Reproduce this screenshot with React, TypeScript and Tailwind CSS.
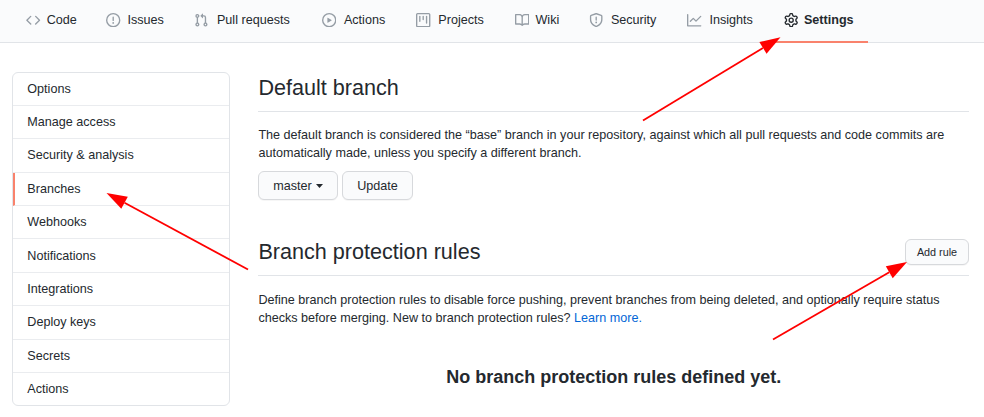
import React from "react";

const ICONS = {
  code: "M4.72 3.22a.75.75 0 011.06 1.06L2.06 8l3.72 3.72a.75.75 0 11-1.06 1.06L.47 8.53a.75.75 0 010-1.06l4.25-4.25zm6.56 0a.75.75 0 10-1.06 1.06L13.94 8l-3.72 3.72a.75.75 0 101.06 1.06l4.25-4.25a.75.75 0 000-1.06l-4.25-4.25z",
  issue: "M8 1.5a6.5 6.5 0 100 13 6.5 6.5 0 000-13zM0 8a8 8 0 1116 0A8 8 0 010 8zm9 3a1 1 0 11-2 0 1 1 0 012 0zm-.25-6.25a.75.75 0 00-1.5 0v3.5a.75.75 0 001.5 0v-3.5z",
  pull: "M7.177 3.073L9.573.677A.25.25 0 0110 .854v4.792a.25.25 0 01-.427.177L7.177 3.427a.25.25 0 010-.354zM3.75 2.5a.75.75 0 100 1.5.75.75 0 000-1.5zm-2.25.75a2.25 2.25 0 113 2.122v5.256a2.251 2.251 0 11-1.5 0V5.372A2.25 2.25 0 011.5 3.25zM11 2.5h-1V4h1a1 1 0 011 1v5.628a2.251 2.251 0 101.5 0V5A2.5 2.5 0 0011 2.5zm1 10.25a.75.75 0 111.5 0 .75.75 0 01-1.5 0zM3.75 12a.75.75 0 100 1.5.75.75 0 000-1.5z",
  play: "M1.5 8a6.5 6.5 0 1113 0 6.5 6.5 0 01-13 0zM8 0a8 8 0 100 16A8 8 0 008 0zM6.379 5.227A.25.25 0 006 5.442v5.117a.25.25 0 00.379.214l4.264-2.559a.25.25 0 000-.428L6.379 5.227z",
  project: "M1.75 0A1.75 1.75 0 000 1.75v12.5C0 15.216.784 16 1.75 16h12.5A1.75 1.75 0 0016 14.25V1.75A1.75 1.75 0 0014.25 0H1.75zM1.5 1.75a.25.25 0 01.25-.25h12.5a.25.25 0 01.25.25v12.5a.25.25 0 01-.25.25H1.75a.25.25 0 01-.25-.25V1.75zM11.75 3a.75.75 0 00-.75.75v7.5a.75.75 0 001.5 0v-7.5a.75.75 0 00-.75-.75zm-8.25.75a.75.75 0 011.5 0v5.5a.75.75 0 01-1.5 0v-5.5zM8 3a.75.75 0 00-.75.75v3.5a.75.75 0 001.5 0v-3.5A.75.75 0 008 3z",
  book: "M0 1.75A.75.75 0 01.75 1h4.253c1.227 0 2.317.59 3 1.501A3.744 3.744 0 0111.006 1h4.245a.75.75 0 01.75.75v10.5a.75.75 0 01-.75.75h-4.507a2.25 2.25 0 00-1.591.659l-.622.621a.75.75 0 01-1.06 0l-.622-.621A2.25 2.25 0 005.258 13H.75a.75.75 0 01-.75-.75V1.75zm8.755 3a2.25 2.25 0 012.25-2.25H14.5v9h-3.757c-.71 0-1.4.201-1.992.572l.004-7.322zm-1.504 7.324l.004-5.073-.002-2.253A2.25 2.25 0 005.003 2.5H1.5v9h3.757a3.75 3.75 0 011.994.574z",
  shield: "M7.467.133a1.75 1.75 0 011.066 0l5.25 1.68A1.75 1.75 0 0115 3.48V7c0 1.566-.32 3.182-1.303 4.682-.983 1.498-2.585 2.813-5.032 3.855a1.7 1.7 0 01-1.33 0c-2.447-1.042-4.049-2.357-5.032-3.855C1.32 10.182 1 8.566 1 7V3.48a1.75 1.75 0 011.217-1.667l5.25-1.68zm.61 1.429a.25.25 0 00-.153 0l-5.25 1.68a.25.25 0 00-.174.238V7c0 1.358.275 2.666 1.057 3.86.784 1.194 2.121 2.34 4.366 3.297a.2.2 0 00.154 0c2.245-.956 3.582-2.104 4.366-3.298C13.225 9.666 13.5 8.36 13.5 7V3.48a.25.25 0 00-.174-.237l-5.25-1.68zM9 10.5a1 1 0 11-2 0 1 1 0 012 0zm-.25-5.75a.75.75 0 10-1.5 0v3a.75.75 0 001.5 0v-3z",
  graph: "M1.5 1.75a.75.75 0 00-1.5 0v12.5c0 .414.336.75.75.75h14.5a.75.75 0 000-1.5H1.5V1.75zm14.28 2.53a.75.75 0 00-1.06-1.06L10 7.94 7.53 5.47a.75.75 0 00-1.06 0L3.22 8.72a.75.75 0 001.06 1.06L7 7.06l2.47 2.47a.75.75 0 001.06 0l5.25-5.25z",
  gear: "M7.429 1.525a6.593 6.593 0 011.142 0c.036.003.108.036.137.146l.289 1.105c.147.56.55.967.997 1.189.174.086.341.183.501.29.417.278.97.423 1.53.27l1.102-.303c.11-.03.175.016.195.046.219.31.41.641.573.989.014.031.022.11-.059.19l-.815.806c-.411.406-.562.957-.53 1.456a4.588 4.588 0 010 .582c-.032.499.119 1.05.53 1.456l.815.806c.08.08.073.159.059.19a6.494 6.494 0 01-.573.99c-.02.029-.086.074-.195.045l-1.103-.303c-.559-.153-1.112-.008-1.529.27-.16.107-.327.204-.5.29-.449.222-.851.628-.998 1.189l-.289 1.105c-.029.11-.101.143-.137.146a6.613 6.613 0 01-1.142 0c-.036-.003-.108-.037-.137-.146l-.289-1.105c-.147-.56-.55-.967-.997-1.189a4.502 4.502 0 01-.501-.29c-.417-.278-.97-.423-1.53-.27l-1.102.303c-.11.03-.175-.016-.195-.046a6.492 6.492 0 01-.573-.989c-.014-.031-.022-.11.059-.19l.815-.806c.411-.406.562-.957.53-1.456a4.587 4.587 0 010-.582c.032-.499-.119-1.05-.53-1.456l-.815-.806c-.08-.08-.073-.159-.059-.19a6.44 6.44 0 01.573-.99c.02-.029.086-.075.195-.045l1.103.303c.559.153 1.112.008 1.529-.27.16-.107.327-.204.5-.29.449-.222.851-.628.998-1.189l.289-1.105c.029-.11.101-.143.137-.146zM8 0c-.236 0-.47.01-.701.03-.743.065-1.29.615-1.458 1.261l-.29 1.106c-.017.066-.078.158-.211.224a5.994 5.994 0 00-.668.386c-.123.082-.233.09-.3.071L3.27 2.776c-.644-.177-1.392.02-1.82.63a7.977 7.977 0 00-.704 1.217c-.315.675-.111 1.422.363 1.891l.815.806c.05.048.098.147.088.294a6.084 6.084 0 000 .772c.01.147-.038.246-.088.294l-.815.806c-.474.469-.678 1.216-.363 1.891.2.428.436.835.704 1.218.428.609 1.176.806 1.82.63l1.103-.303c.066-.019.176-.011.299.071.213.143.436.272.668.386.133.066.194.158.212.224l.289 1.106c.169.646.715 1.196 1.458 1.26a8.094 8.094 0 001.402 0c.743-.064 1.29-.614 1.458-1.26l.29-1.106c.017-.066.078-.158.211-.224a5.98 5.98 0 00.668-.386c.123-.082.233-.09.3-.071l1.102.302c.644.177 1.392-.02 1.82-.63.268-.382.505-.789.704-1.217.315-.675.111-1.422-.364-1.891l-.814-.806c-.05-.048-.098-.147-.088-.294a6.1 6.1 0 000-.772c-.01-.147.039-.246.088-.294l.814-.806c.475-.469.679-1.216.364-1.891a7.992 7.992 0 00-.704-1.218c-.428-.609-1.176-.806-1.82-.63l-1.103.303c-.066.019-.176.011-.299-.071a5.991 5.991 0 00-.668-.386c-.133-.066-.194-.158-.212-.224L10.16 1.29C9.99.645 9.444.095 8.701.031A8.094 8.094 0 008 0zm1.5 8a1.5 1.5 0 11-3 0 1.5 1.5 0 013 0zM11 8a3 3 0 11-6 0 3 3 0 016 0z",
};

type IconName = keyof typeof ICONS;

const TABS: { icon: IconName; label: string; active?: boolean }[] = [
  { icon: "code", label: "Code" },
  { icon: "issue", label: "Issues" },
  { icon: "pull", label: "Pull requests" },
  { icon: "play", label: "Actions" },
  { icon: "project", label: "Projects" },
  { icon: "book", label: "Wiki" },
  { icon: "shield", label: "Security" },
  { icon: "graph", label: "Insights" },
  { icon: "gear", label: "Settings", active: true },
];

const MENU = [
  { label: "Options", row: "h-[33px] pt-[7px]" },
  { label: "Manage access", row: "h-[33px] pt-[7px]" },
  { label: "Security & analysis", row: "h-[34px] pt-[7px]" },
  { label: "Branches", row: "h-[33px] pt-[7px]" },
  { label: "Webhooks", row: "h-[33px] pt-[7px]" },
  { label: "Notifications", row: "h-[34px] pt-[8px]" },
  { label: "Integrations", row: "h-[33px] pt-[7px]" },
  { label: "Deploy keys", row: "h-[34px] pt-[7px]" },
  { label: "Secrets", row: "h-[33px] pt-[7px]" },
  { label: "Actions", row: "h-[32px] pt-[7px]" },
];

function Tab({ icon, label, active }: { icon: IconName; label: string; active?: boolean }) {
  return (
    <a
      className={`flex items-center px-[14.4px] pb-[1px] border-b-2 ${
        active ? "border-[#f9826c] font-semibold" : "border-transparent"
      }`}
    >
      <svg
        viewBox="0 0 16 16"
        className={`mr-[5.4px] size-[14.4px] shrink-0 ${active ? "fill-[#24292e]" : "fill-[#959da5]"}`}
      >
        <path fillRule="evenodd" clipRule="evenodd" d={ICONS[icon]} />
      </svg>
      {/* The hidden bold copy keeps a tab's width the same in both states. */}
      <span
        data-content={label}
        className="inline-block text-center whitespace-nowrap before:invisible before:block before:h-0 before:overflow-hidden before:font-semibold before:content-[attr(data-content)]"
      >
        {label}
      </span>
    </a>
  );
}

function Arrow({ from, to }: { from: [number, number]; to: [number, number] }) {
  const dx = to[0] - from[0];
  const dy = to[1] - from[1];
  const len = Math.hypot(dx, dy);
  const ux = dx / len;
  const uy = dy / len;
  const bx = to[0] - ux * 20.5;
  const by = to[1] - uy * 20.5;
  return (
    <g>
      <line x1={from[0]} y1={from[1]} x2={bx} y2={by} stroke="#ff0000" strokeWidth="1.8" />
      <polygon
        fill="#ff0000"
        points={`${to[0]},${to[1]} ${bx - uy * 6.9},${by + ux * 6.9} ${bx + uy * 6.9},${by - ux * 6.9}`}
      />
    </g>
  );
}

export default function App() {
  return (
    <div className="relative h-[417px] w-[984px] overflow-hidden bg-white font-['Liberation_Sans',Arial,sans-serif] text-[12.6px] leading-[18px] text-[#24292e]">
      <nav className="flex h-[43px] border-b border-[#e1e4e8] bg-[#fafbfc] pl-[11.8px]">
        <div className="-mb-px flex">
          {TABS.map((tab) => (
            <Tab key={tab.label} {...tab} />
          ))}
        </div>
      </nav>

      <div className="flex pt-[29px] pl-3">
        <ul className="h-[334px] w-[218px] shrink-0 overflow-hidden rounded-[6px] border border-[#e1e4e8]">
          {MENU.map(({ label, row }) => (
            <li
              key={label}
              className={`border-b border-b-[#eaecef] pr-3 last:border-b-0 ${row} ${
                label === "Branches" ? "border-l-2 border-l-[#f9826c] pl-[12.3px]" : "pl-[14.3px]"
              }`}
            >
              {label}
            </li>
          ))}
        </ul>

        <main className="ml-[28px] w-[711px]">
          <h2 className="h-[40px] border-b border-[#e1e4e8] pl-[0.4px] text-[21.6px] leading-[32px]">Default branch</h2>
          <p className="mt-[14px] pl-[0.4px]">
            The default branch is considered the “base” branch in your repository, against which all pull requests and
            code commits are automatically made, unless you specify a different branch.
          </p>
          <div className="mt-[9px] flex gap-1">
            <button className="flex h-[29px] w-[80px] items-center justify-center gap-1 rounded-[6px] border border-[#d7d9dc] bg-[#fafbfc] shadow-[0_1px_0_rgba(27,31,35,0.04)]">
              master
              <svg viewBox="0 0 7 4" className="h-1 w-[7px] fill-[#24292e]">
                <path d="M0 0h7L3.5 4z" />
              </svg>
            </button>
            <button className="h-[29px] w-[71px] rounded-[6px] border border-[#d7d9dc] bg-[#fafbfc] shadow-[0_1px_0_rgba(27,31,35,0.04)]">
              Update
            </button>
          </div>

          <div className="mt-[36px] flex h-[40px] justify-between border-b border-[#e1e4e8]">
            <h2 className="pl-[0.4px] text-[21.6px] leading-[32px]">Branch protection rules</h2>
            <button className="mt-[3px] h-[26px] w-[64px] rounded-[6px] border border-[#d7d9dc] bg-[#fafbfc] text-[10.8px] shadow-[0_1px_0_rgba(27,31,35,0.04)]">
              Add rule
            </button>
          </div>
          <p className="mt-[15px] pl-[0.4px]">
            Define branch protection rules to disable force pushing, prevent branches from being deleted, and optionally
            require status checks before merging. New to branch protection rules?{" "}
            <a className="text-[#0366d6]">Learn more.</a>
          </p>
          <h3 className="mt-[37px] pl-[0.6px] text-center text-[18px] leading-[27px] font-semibold">
            No branch protection rules defined yet.
          </h3>
        </main>
      </div>

      <svg viewBox="0 0 984 417" className="pointer-events-none absolute inset-0 h-[417px] w-[984px]">
        <Arrow from={[643, 120.5]} to={[780.5, 37.3]} />
        <Arrow from={[248, 269.5]} to={[106.5, 193]} />
        <Arrow from={[773, 339.5]} to={[907, 262]} />
      </svg>
    </div>
  );
}
